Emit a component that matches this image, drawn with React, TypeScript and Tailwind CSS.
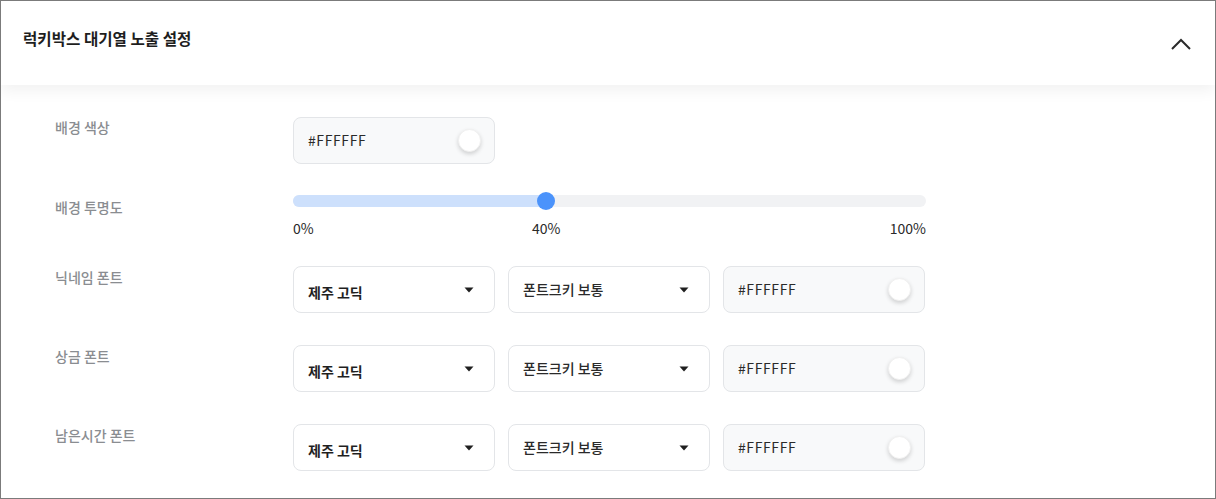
const FONT = { fontFamily: '"Noto Sans CJK KR", "Noto Sans", sans-serif' };

function Knob() {
  return (
    <span className="block w-[23px] h-[23px] rounded-full bg-white shadow-[0_2px_4px_rgba(0,0,0,0.16)] border border-[#f0f0f0]" />
  );
}

function ColorInput({ value }: { value: string }) {
  return (
    <div className="w-[202px] h-[47px] rounded-[8px] border border-[#e3e5e8] bg-[#f8f9fa] flex items-center justify-between pl-[14px] pr-[13px]">
      <span className="text-[14px] text-[#2a2a2a] tracking-[0.6px]">{value}</span>
      <Knob />
    </div>
  );
}

function Caret() {
  return (
    <svg width="10" height="6" viewBox="0 0 10 6" className="shrink-0">
      <path d="M0.5 0.5 L9.5 0.5 L5 5.5 Z" fill="#1f1f1f" />
    </svg>
  );
}

function Select({ label, bold }: { label: string; bold?: boolean }) {
  return (
    <div className="w-[202px] h-[47px] rounded-[8px] border border-[#e3e5e8] bg-white flex items-center justify-between pl-[14px] pr-[20px]">
      <span
        className={bold ? 'text-[14px] font-bold text-[#1f1f1f] pt-[5px]' : 'text-[14px] font-medium text-[#2a2a2a]'}
      >
        {label}
      </span>
      <Caret />
    </div>
  );
}

function FontRow({ label }: { label: string }) {
  return (
    <div className="flex">
      <div className="w-[238px] pt-[1px] text-[14px] leading-[20px] font-medium text-[#8a8d91]">{label}</div>
      <div className="flex gap-[13px]">
        <Select label="제주 고딕" bold />
        <Select label="폰트크키 보통" />
        <ColorInput value="#FFFFFF" />
      </div>
    </div>
  );
}

export default function App() {
  const opacity = 40;
  return (
    <div style={FONT} className="w-[1216px] h-[499px] border border-[#7b7b7b] bg-white overflow-hidden">
      {/* Header */}
      <div className="relative z-10 h-[84px] bg-white flex items-start justify-between pl-[22px] pr-[23px] shadow-[0_6px_14px_rgba(0,0,0,0.055)]">
        <h2 className="mt-[27px] text-[15.6px] leading-[20px] font-bold text-[#1e1e1e]">럭키박스 대기열 노출 설정</h2>
        <svg width="22" height="14" viewBox="0 0 22 14" className="mt-[36px]">
          <path d="M2 12 L11 3 L20 12" fill="none" stroke="#2a2a2a" strokeWidth="2" />
        </svg>
      </div>

      {/* Body */}
      <div className="pl-[54px] pt-[32px] flex flex-col">
        <div className="flex">
          <div className="w-[238px] text-[14px] leading-[20px] font-medium text-[#8a8d91]">배경 색상</div>
          <ColorInput value="#FFFFFF" />
        </div>

        <div className="flex mt-[31px]">
          <div className="w-[238px] pt-[2px] text-[14px] leading-[20px] font-medium text-[#8a8d91]">배경 투명도</div>
          <div className="w-[633px]">
            <div className="relative h-[12px] rounded-full bg-[#f1f2f4]">
              <div className="h-full rounded-full bg-[#cde0fc]" style={{ width: `${opacity}%` }} />
              <span
                className="absolute top-1/2 -translate-x-1/2 -translate-y-1/2 w-[18px] h-[18px] rounded-full bg-[#4b93fb]"
                style={{ left: `${opacity}%` }}
              />
            </div>
            <div className="relative mt-[11px] h-[20px] text-[14px] leading-[20px] text-[#2a2a2a]">
              <span className="absolute left-0">0%</span>
              <span className="absolute -translate-x-1/2" style={{ left: `${opacity}%` }}>
                40%
              </span>
              <span className="absolute right-0">100%</span>
            </div>
          </div>
        </div>

        <div className="flex flex-col gap-[32px] mt-[28px]">
          <FontRow label="닉네임 폰트" />
          <FontRow label="상금 폰트" />
          <FontRow label="남은시간 폰트" />
        </div>
      </div>
    </div>
  );
}
